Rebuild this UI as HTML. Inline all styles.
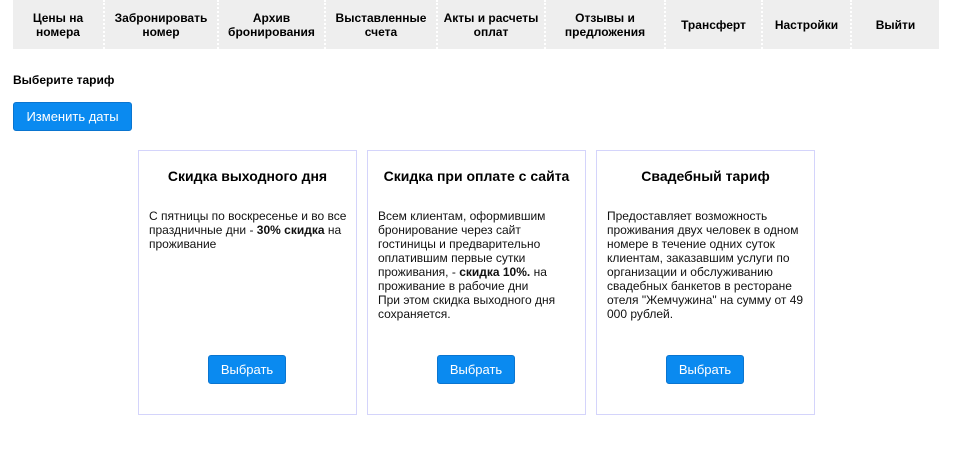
<!DOCTYPE html>
<html><head><meta charset="utf-8"><style>
*{margin:0;padding:0;box-sizing:border-box}
body{width:955px;height:471px;background:#fff;font-family:"Liberation Sans",Arial,sans-serif;color:#000;position:relative;overflow:hidden}
.nav{position:absolute;left:13px;top:0;width:926px;height:49px;background:#eee}
.nav div{position:absolute;top:0;height:49px;display:flex;align-items:center;justify-content:center;text-align:center;font-size:12px;font-weight:bold;line-height:14px;border-right:2px dotted #fff}
.nav div:last-child{border-right:none}
.h{position:absolute;left:13px;top:73px;font-size:12px;font-weight:bold}
.btn{position:absolute;background:#0a8af0;color:#fff;border:1px solid #0a75d0;border-radius:3px;font-size:13px;display:flex;align-items:center;justify-content:center}
.card{position:absolute;top:150px;width:219px;height:265px;border:1px solid #d4d4fb}
.card h3{position:absolute;top:17px;left:0;width:100%;text-align:center;font-size:14px;font-weight:bold}
.card p{position:absolute;top:58px;left:10px;width:192px;font-size:12px;line-height:14px;color:#111}
.card .btn{top:204px;left:69px;width:78px;height:29px}
</style></head><body>
<div class="nav">
<div style="left:0;width:92px">Цены на<br>номера</div>
<div style="left:92px;width:114px">Забронировать<br>номер</div>
<div style="left:206px;width:107px">Архив<br>бронирования</div>
<div style="left:313px;width:112px">Выставленные<br>счета</div>
<div style="left:425px;width:108px">Акты и расчеты<br>оплат</div>
<div style="left:533px;width:120px">Отзывы и<br>предложения</div>
<div style="left:653px;width:97px">Трансферт</div>
<div style="left:750px;width:89px">Настройки</div>
<div style="left:839px;width:87px">Выйти</div>
</div>
<div class="h">Выберите тариф</div>
<div class="btn" style="left:13px;top:102px;width:119px;height:29px">Изменить даты</div>
<div class="card" style="left:138px"><h3>Скидка выходного дня</h3><p style="width:205px">С пятницы по воскресенье и во все праздничные дни - <b>30% скидка</b> на проживание</p><div class="btn">Выбрать</div></div>
<div class="card" style="left:367px"><h3>Скидка при оплате с сайта</h3><p>Всем клиентам, оформившим<br>бронирование через сайт<br>гостиницы и предварительно<br>оплатившим первые сутки<br>проживания, - <b>скидка 10%.</b> на<br>проживание в рабочие дни<br>При этом скидка выходного дня<br>сохраняется.</p><div class="btn">Выбрать</div></div>
<div class="card" style="left:596px"><h3>Свадебный тариф</h3><p style="width:205px">Предоставляет возможность проживания двух человек в одном номере в течение одних суток клиентам, заказавшим услуги по организации и обслуживанию свадебных банкетов в ресторане отеля "Жемчужина" на сумму от 49 000 рублей.</p><div class="btn">Выбрать</div></div>
</body></html>
